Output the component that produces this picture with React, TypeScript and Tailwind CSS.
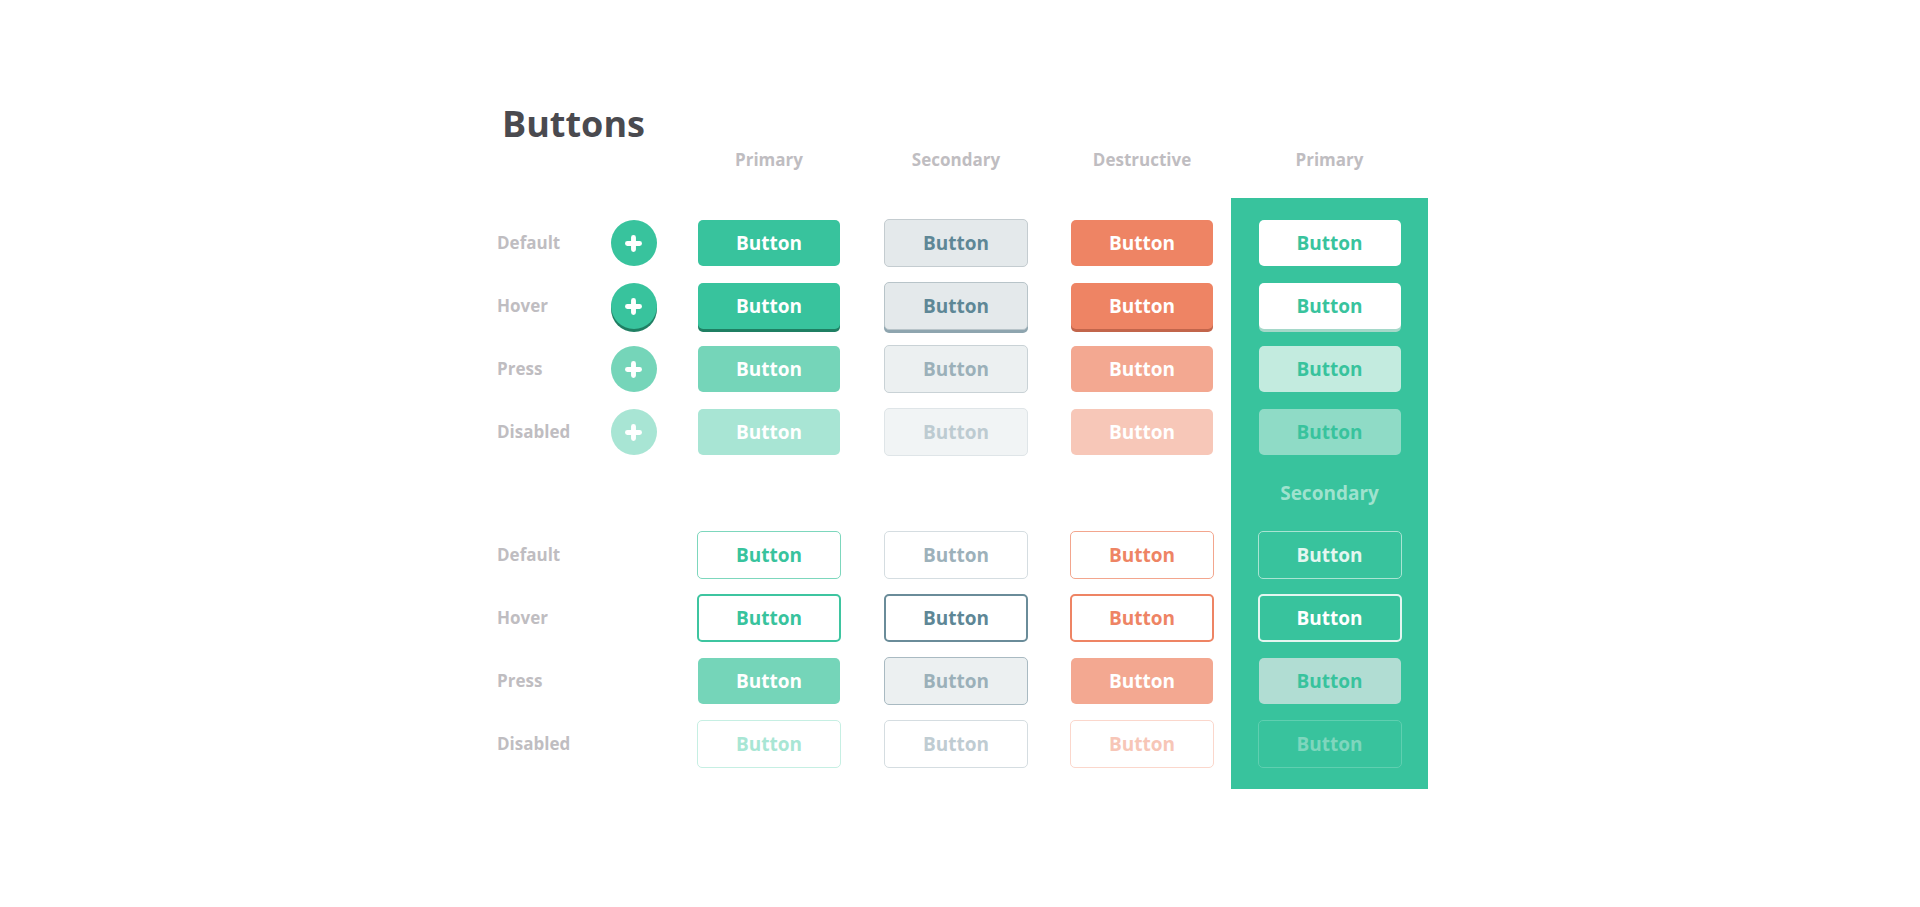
import type { ReactNode } from "react";

type Cell = { kind: "fill" | "box"; cls: string } | null;

const LABELS = ["Default", "Hover", "Press", "Disabled"];

// group 1 = solid buttons, group 2 = outline buttons
const PRIMARY: Cell[][] = [
	[
		{ kind: "fill", cls: "bg-[#38c39d] text-white" },
		{ kind: "fill", cls: "bg-[#38c39d] text-white shadow-[0_3px_0_#1f7f63]" },
		{ kind: "fill", cls: "bg-[#75d5b9] text-white" },
		{ kind: "fill", cls: "bg-[#a8e5d4] text-white" },
	],
	[
		{ kind: "box", cls: "border border-[#7dd7bd] text-[#38c39d]" },
		{ kind: "box", cls: "border-2 border-[#3ec5a0] text-[#38c39d]" },
		{ kind: "fill", cls: "bg-[#75d5b9] text-white" },
		{ kind: "box", cls: "border border-[#c6efe3] text-[#a8e6d4]" },
	],
];

const SECONDARY: Cell[][] = [
	[
		{ kind: "box", cls: "border border-[#c4ccd0] bg-[#e4e9eb] text-[#5e8796]" },
		{ kind: "box", cls: "border border-[#b8c4c9] bg-[#e4e9eb] text-[#5e8796] shadow-[0_3px_0_#8ea5af]" },
		{ kind: "box", cls: "border border-[#c9d2d6] bg-[#ecf0f1] text-[#9bb0b9]" },
		{ kind: "box", cls: "border border-[#dfe5e8] bg-[#f1f4f5] text-[#bdcbd1]" },
	],
	[
		{ kind: "box", cls: "border border-[#d5dde1] text-[#9db1ba]" },
		{ kind: "box", cls: "border-2 border-[#6a8c99] text-[#5e8796]" },
		{ kind: "box", cls: "border border-[#a9bac2] bg-[#ecf0f1] text-[#9bb0b9]" },
		{ kind: "box", cls: "border border-[#d5dde1] text-[#bfccd2]" },
	],
];

const DESTRUCTIVE: Cell[][] = [
	[
		{ kind: "fill", cls: "bg-[#ee8464] text-white" },
		{ kind: "fill", cls: "bg-[#ee8464] text-white shadow-[0_3px_0_#c2654b]" },
		{ kind: "fill", cls: "bg-[#f3a891] text-white" },
		{ kind: "fill", cls: "bg-[#f7c7b8] text-white" },
	],
	[
		{ kind: "box", cls: "border border-[#f3a68e] text-[#ee8464]" },
		{ kind: "box", cls: "border-2 border-[#ee8464] text-[#ee8464]" },
		{ kind: "fill", cls: "bg-[#f3a891] text-white" },
		{ kind: "box", cls: "border border-[#fbd7cc] text-[#f7c6b7]" },
	],
];

const ON_GREEN: Cell[][] = [
	[
		{ kind: "fill", cls: "bg-white text-[#38c39d]" },
		{ kind: "fill", cls: "bg-white text-[#38c39d] shadow-[0_3px_0_#a5d8c9]" },
		{ kind: "fill", cls: "bg-[#c3ebdf] text-[#38c39d]" },
		{ kind: "fill", cls: "bg-[#8fdbc6] text-[#38c39d]" },
	],
	[
		{ kind: "box", cls: "border border-[#a9e4d3] text-[#e4f6f0]" },
		{ kind: "box", cls: "border-2 border-[#e3f6f0] text-white" },
		{ kind: "fill", cls: "bg-[#b1ddd3] text-[#38c39d]" },
		{ kind: "box", cls: "border border-[#5fcfb0] text-[#7fd6bd]" },
	],
];

const CIRCLES = [
	"bg-[#38c39d]",
	"bg-[#38c39d] shadow-[0_3px_0_#1f7f63]",
	"bg-[#75d5b9]",
	"bg-[#a8e5d4]",
];

function Slot({ children }: { children?: ReactNode }) {
	return <div className="flex h-[48px] items-center justify-center">{children}</div>;
}

function Btn({ cell }: { cell: Cell }) {
	if (!cell) return <Slot />;
	return (
		<Slot>
			<button
				className={
					(cell.kind === "fill" ? "h-[46px] w-[142px] " : "h-[48px] w-[144px] ") +
					"flex items-center justify-center rounded-[5px] text-[19px] font-bold leading-none " +
					cell.cls
				}
			>
				Button
			</button>
		</Slot>
	);
}

function Rows({ children }: { children: ReactNode }) {
	return <div className="flex flex-col gap-[15px]">{children}</div>;
}

function Header({ text }: { text?: string }) {
	return (
		<div className="mt-[7px] h-[49px] text-center text-[17px] font-bold leading-[22px] text-[#bfbdc1]">
			{text}
		</div>
	);
}

// the gap between the solid and outline groups
function Divider({ children }: { children?: ReactNode }) {
	return <div className="flex h-[75px] items-center justify-center">{children}</div>;
}

function Column({ title, data, className }: { title: string; data: Cell[][]; className: string }) {
	return (
		<div className={"flex w-[144px] flex-col " + className}>
			<Header text={title} />
			<div className="pt-[21px]">
				<Rows>
					{data[0].map((c, i) => (
						<Btn key={i} cell={c} />
					))}
				</Rows>
				<Divider />
				<Rows>
					{data[1].map((c, i) => (
						<Btn key={i} cell={c} />
					))}
				</Rows>
			</div>
		</div>
	);
}

function Plus() {
	return (
		<svg width="17" height="17" viewBox="0 0 16 16">
			<path d="M8 2.3v11.4M2.3 8h11.4" stroke="white" strokeWidth="4.6" strokeLinecap="round" />
		</svg>
	);
}

export default function App() {
	return (
		<div className="min-h-[907px] w-full bg-white font-['Open_Sans',sans-serif]">
			<div className="pl-[496px] pt-[106px]">
				<h1 className="pl-[6px] text-[36px] font-bold leading-[36px] text-[#4a4a4f]">Buttons</h1>

				<div className="flex">
					{/* Row labels */}
					<div className="flex w-[114px] flex-col">
						<Header />
						<div className="pt-[21px]">
							<Rows>
								{LABELS.map((l) => (
									<div key={l} className="flex h-[48px] items-center pl-[1px] text-[17px] font-bold text-[#bfbdc1]">
										{l}
									</div>
								))}
							</Rows>
							<Divider />
							<Rows>
								{LABELS.map((l) => (
									<div key={l} className="flex h-[48px] items-center pl-[1px] text-[17px] font-bold text-[#bfbdc1]">
										{l}
									</div>
								))}
							</Rows>
						</div>
					</div>

					{/* Floating action buttons */}
					<div className="mr-[40px] flex w-[47px] flex-col">
						<Header />
						<div className="pt-[21px]">
							<Rows>
								{CIRCLES.map((c, i) => (
									<Slot key={i}>
										<div className={"flex h-[46px] w-[46px] items-center justify-center rounded-full " + c}>
											<Plus />
										</div>
									</Slot>
								))}
							</Rows>
						</div>
					</div>

					<Column title="Primary" data={PRIMARY} className="mr-[43px]" />
					<Column title="Secondary" data={SECONDARY} className="mr-[42px]" />
					<Column title="Destructive" data={DESTRUCTIVE} className="mr-[17px]" />

					{/* On green background */}
					<div className="flex w-[197px] flex-col">
						<Header text="Primary" />
						<div className="bg-[#38c39d] px-[26px] pb-[21px] pt-[21px]">
							<Rows>
								{ON_GREEN[0].map((c, i) => (
									<Btn key={i} cell={c} />
								))}
							</Rows>
							<Divider>
								<span className="text-[19px] font-bold text-[#9fe2ce]">Secondary</span>
							</Divider>
							<Rows>
								{ON_GREEN[1].map((c, i) => (
									<Btn key={i} cell={c} />
								))}
							</Rows>
						</div>
					</div>
				</div>
			</div>
		</div>
	);
}
